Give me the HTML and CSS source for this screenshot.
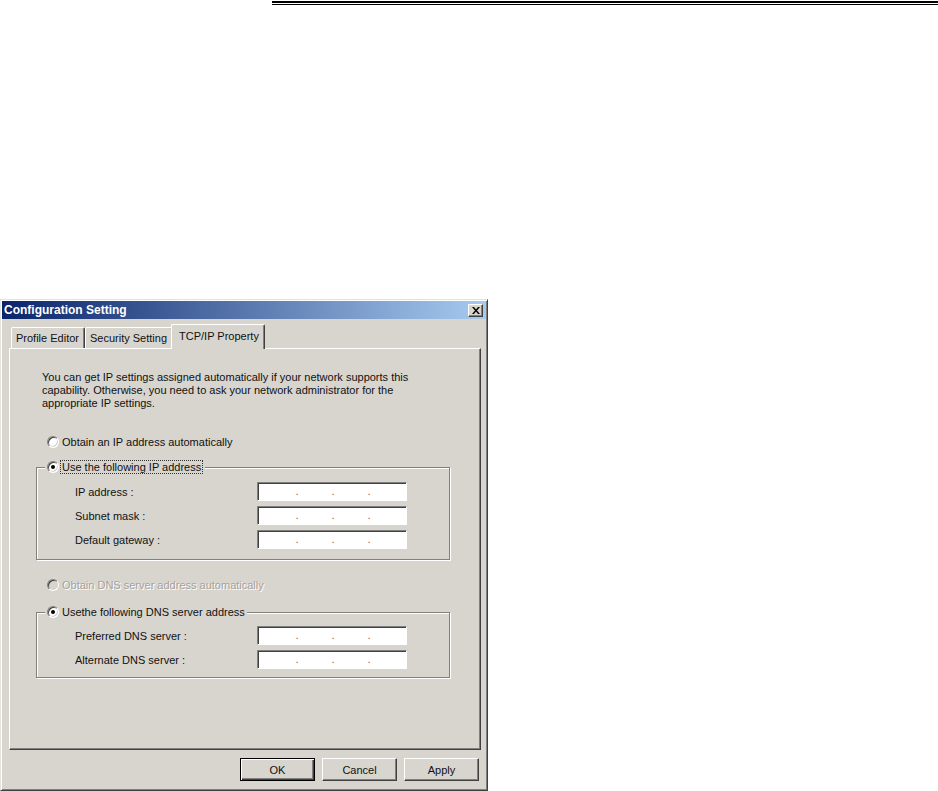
FILE: index.html
```html
<!DOCTYPE html>
<html lang="en">
<head>
  <meta charset="UTF-8" />
  <title>Configuration Setting</title>
  <link rel="stylesheet" href="styles.css">
</head>
<body>

  <div class="rule"></div>

  <div class="dialog">
    <div class="titlebar">
      <span class="title">Configuration Setting</span>
      <button class="close" aria-label="Close">
        <svg width="8" height="7" viewBox="0 0 8 7"><path d="M0 0h2l2 2.5L6 0h2L5 3.5 8 7H6L4 4.5 2 7H0l3-3.5z" fill="#000"/></svg>
      </button>
    </div>

    <div class="tabs">
      <div class="tab">Profile Editor</div>
      <div class="tab">Security Setting</div>
      <div class="tab active">TCP/IP Property</div>
    </div>

    <div class="panel">
      <p class="intro">You can get IP settings assigned automatically if your network supports this<br>capability. Otherwise, you need to ask your network administrator for the<br>appropriate IP settings.</p>

      <div class="option first"><span class="radio"></span>Obtain an IP address automatically</div>

      <fieldset class="group ip-group">
        <legend><span class="option"><span class="radio checked"></span><span class="focus">Use the following IP address</span></span></legend>
        <div class="fields">
          <span>IP address :</span>
          <div class="ip"><span>.</span><span>.</span><span>.</span></div>
          <span>Subnet mask :</span>
          <div class="ip"><span>.</span><span>.</span><span>.</span></div>
          <span>Default gateway :</span>
          <div class="ip"><span>.</span><span>.</span><span>.</span></div>
        </div>
      </fieldset>

      <div class="option dns disabled"><span class="radio"></span>Obtain DNS server address automatically</div>

      <fieldset class="group dns-group">
        <legend><span class="option"><span class="radio checked"></span>Usethe following DNS server address</span></legend>
        <div class="fields">
          <span>Preferred DNS server :</span>
          <div class="ip"><span>.</span><span>.</span><span>.</span></div>
          <span>Alternate DNS server :</span>
          <div class="ip"><span>.</span><span>.</span><span>.</span></div>
        </div>
      </fieldset>
    </div>

    <div class="buttons">
      <button class="btn default">OK</button>
      <button class="btn">Cancel</button>
      <button class="btn">Apply</button>
    </div>
  </div>

</body>
</html>
```

FILE: styles.css
```css
:root {
  --face: #d8d5cf;
  --shadow: #808080;
  --dark: #404040;
  --light: #fff;
  --text: #111;
}

* {
  box-sizing: border-box;
}

body {
  margin: 0;
  background: #fff;
  font-family: "Liberation Sans", Arial, sans-serif;
  font-size: 11px;
  color: var(--text);
}

.rule {
  margin: 1px 0 0 272px;
  height: 4px;
  border-top: 2px solid #000;
  border-bottom: 1px solid #000;
}

/* Dialog frame */
.dialog {
  margin-top: 294px;
  width: 488px;
  height: 492px;
  padding: 1px;
  background: var(--face);
  border: 1px solid;
  border-color: #e4e2dd var(--dark) var(--dark) #e4e2dd;
  box-shadow: inset 1px 1px var(--light), inset -1px -1px var(--shadow);
  display: flex;
  flex-direction: column;
}

.titlebar {
  height: 18px;
  display: flex;
  align-items: center;
  justify-content: space-between;
  padding: 0 3px 0 2px;
  background: linear-gradient(to right, #0a246a, #a6caf0);
  color: #fff;
  font-size: 12px;
  font-weight: bold;
}

.close {
  width: 15px;
  height: 13px;
  padding: 0;
  display: flex;
  align-items: center;
  justify-content: center;
  background: var(--face);
  border: 1px solid;
  border-color: var(--light) var(--dark) var(--dark) var(--light);
  box-shadow: inset -1px -1px var(--shadow);
}

/* Tabs */
.tabs {
  display: flex;
  align-items: flex-end;
  height: 25px;
  margin: 5px 0 -1px 9px;
  position: relative;
  z-index: 1;
}

.tab {
  height: 21px;
  margin-bottom: 1px;
  padding: 0 5px 0 4px;
  display: flex;
  align-items: center;
  border-top: 1px solid var(--light);
  border-left: 1px solid var(--light);
  border-right: 1px solid var(--dark);
  border-radius: 2px 2px 0 0;
  box-shadow: inset -1px 0 var(--shadow);
}

.tab.active {
  height: 25px;
  margin: 0 0 0 -2px;
  padding: 0 5px 3px 7px;
  background: var(--face);
}

.panel {
  width: 472px;
  height: 402px;
  margin-left: 7px;
  padding-left: 26px;
  border: 1px solid;
  border-color: var(--light) var(--dark) var(--dark) var(--light);
  box-shadow: inset -1px -1px var(--shadow);
}

.intro {
  margin: 22px 0 0 6px;
  line-height: 13px;
}

/* Radio options */
.option {
  display: flex;
  align-items: center;
  gap: 3px;
  height: 14px;
  white-space: nowrap;
}

.panel > .option {
  margin-left: 11px;
}

.option.first {
  margin-top: 25px;
}

.option.dns {
  margin-top: 18px;
}

.option.disabled {
  color: #a5a29c;
  text-shadow: 1px 1px var(--light);
}

.radio {
  flex: none;
  width: 12px;
  height: 12px;
  border-radius: 50%;
  background: #fff;
  border: 1px solid;
  border-color: var(--shadow) var(--light) var(--light) var(--shadow);
  box-shadow: inset 1px 1px var(--dark), inset -1px -1px #d4d0c8;
  display: grid;
  place-items: center;
}

.radio.checked::after {
  content: "";
  width: 4px;
  height: 4px;
  border-radius: 50%;
  background: #000;
}

.disabled .radio {
  background: var(--face);
}

.focus {
  margin-left: -2px;
  padding: 0 1px;
  line-height: 12px;
  border: 1px dotted #333;
}

/* Group boxes */
.group {
  width: 414px;
  min-width: 0;
  margin: 11px 0 0;
  padding: 8px 0 10px;
  border: 1px solid var(--shadow);
  box-shadow: inset 1px 1px var(--light), 1px 1px var(--light);
}

.dns-group {
  margin-top: 13px;
  padding-top: 7px;
  padding-bottom: 8px;
}

.group legend {
  margin-left: 8px;
  padding: 0 2px;
  background: var(--face);
}

.fields {
  display: grid;
  grid-template-columns: 182px 150px;
  row-gap: 5px;
  align-items: center;
  padding-left: 38px;
}

.ip {
  height: 19px;
  padding-left: 37px;
  display: flex;
  align-items: center;
  gap: 32px;
  background: #fff;
  border: 1px solid;
  border-color: var(--shadow) var(--light) var(--light) var(--shadow);
  box-shadow: inset 1px 1px var(--dark);
}

.ip span {
  width: 4px;
  text-align: center;
  color: #666;
  line-height: 1;
}

/* Bottom buttons */
.buttons {
  display: flex;
  justify-content: flex-end;
  gap: 7px;
  margin: 8px 7px 0 0;
}

.btn {
  width: 75px;
  height: 23px;
  padding: 0;
  font: inherit;
  color: var(--text);
  background: var(--face);
  border: 1px solid;
  border-color: var(--light) var(--dark) var(--dark) var(--light);
  box-shadow: inset -1px -1px var(--shadow);
}

.btn.default {
  border-color: #000;
  box-shadow: inset 1px 1px var(--light), inset -1px -1px var(--dark), inset -2px -2px var(--shadow);
}
```
